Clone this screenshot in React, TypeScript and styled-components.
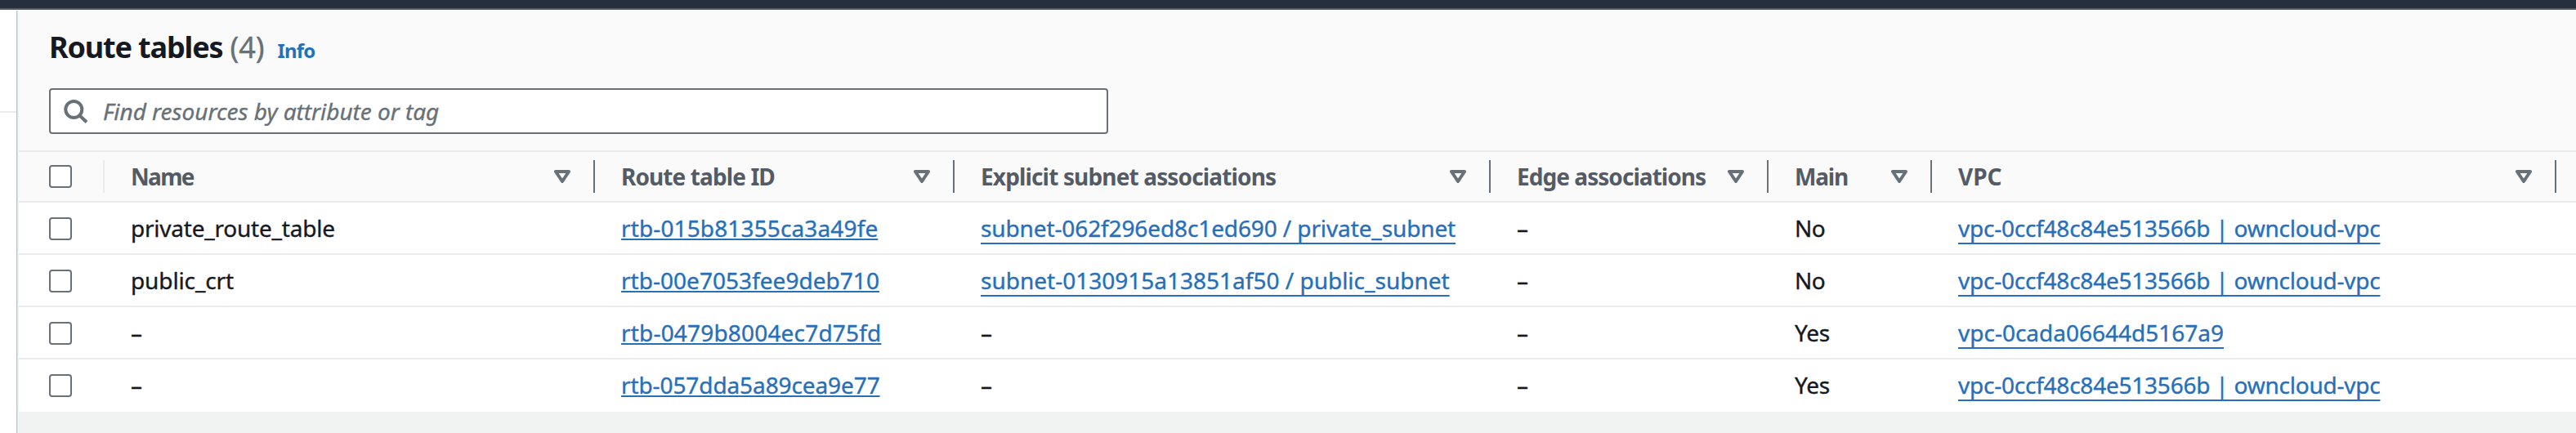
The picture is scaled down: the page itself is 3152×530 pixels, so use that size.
import React from 'react';
import styled, { createGlobalStyle } from 'styled-components';

const GlobalStyle = createGlobalStyle`
  * { box-sizing: border-box; }
  body {
    margin: 0;
    background: #ffffff;
    color: #16191f;
    font-family: "Noto Sans", "Open Sans", sans-serif;
    font-size: 28px;
    line-height: 44px;
    -webkit-text-stroke: 0.35px currentColor;
  }
`;

const Page = styled.div`
  display: flex;
  flex-direction: column;
  height: 530px;
  overflow: hidden;
`;

const TopBar = styled.header`
  flex: none;
  height: 12px;
  background: #262f3e;
  border-bottom: 2px solid #545b66;
`;

const Body = styled.div`
  flex: 1;
  display: flex;
  min-height: 0;
`;

const Sidebar = styled.aside`
  flex: none;
  width: 20px;
  padding-top: 124px;
`;

const SidebarRule = styled.div`
  height: 2px;
  background: #ebebeb;
`;

const PanelEdge = styled.div`
  flex: none;
  width: 3px;
  margin-top: 1px;
  background: linear-gradient(to right, #bcc4c6 0 1px, #e0e4e5 1px 2px, #f3f4f5 2px 3px);
`;

const Panel = styled.main`
  flex: 1;
  min-width: 0;
  background: #f1f3f3;
`;

const PanelHeader = styled.div`
  height: 174px;
  padding: 21px 0 0 37px;
  background: #fafafa;
  border-bottom: 2px solid #ebebeb;
`;

const TitleRow = styled.div`
  display: flex;
  align-items: baseline;
  height: 50px;
  line-height: 50px;
  white-space: pre;
`;

const Title = styled.h1`
  margin: 0 9px 0 0;
  font-size: 36px;
  font-weight: 700;
  letter-spacing: -1.15px;
  -webkit-text-stroke: 0;
`;

const Counter = styled.span`
  width: 58px;
  font-size: 36px;
  color: #687078;
`;

const InfoLink = styled.a`
  font-size: 24px;
  font-weight: 700;
  letter-spacing: -0.8px;
  color: #2570bb;
  -webkit-text-stroke: 0;
`;

const SearchBox = styled.div`
  display: flex;
  align-items: center;
  width: 1296px;
  height: 56px;
  margin-top: 25px;
  padding-left: 14px;
  background: #ffffff;
  border: 2px solid #687078;
  border-radius: 4px;
`;

const Placeholder = styled.span`
  margin-left: 18px;
  font-style: italic;
  letter-spacing: -0.05px;
  color: #687078;
`;

const columns = '105px 600px 440px 656px 340px 200px 764px 1fr';

const HeaderRow = styled.div`
  display: grid;
  grid-template-columns: ${columns};
  height: 62px;
  background: #fafafa;
  border-bottom: 2px solid #ebebeb;
`;

const Row = styled.div`
  display: grid;
  grid-template-columns: ${columns};
  height: 64px;
  background: #ffffff;
  border-bottom: 2px solid #ebebeb;
  &:last-child { border-bottom-color: #ffffff; }
`;

const SelectCell = styled.div<{ $divider?: boolean }>`
  height: ${p => (p.$divider ? '40px' : 'auto')};
  margin-top: ${p => (p.$divider ? '10px' : '12px')};
  padding: 6px 0 0 37px;
  border-right: ${p => (p.$divider ? '2px solid #ebebeb' : 'none')};
`;

const Checkbox = styled.div`
  width: 28px;
  height: 28px;
  background: #ffffff;
  border: 2px solid #687078;
  border-radius: 4px;
`;

const HeaderCell = styled.div`
  display: flex;
  align-items: center;
  justify-content: space-between;
  height: 40px;
  margin-top: 10px;
  padding: 0 28px 0 32px;
  border-right: 2px solid #687078;
`;

const HeaderLabel = styled.span<{ $track: number }>`
  font-weight: 700;
  color: #545b64;
  letter-spacing: ${p => p.$track}px;
  white-space: nowrap;
  -webkit-text-stroke: 0;
`;

const Cell = styled.div<{ $track?: number }>`
  padding: 9px 0 0 32px;
  letter-spacing: ${p => p.$track ?? 0}px;
  white-space: nowrap;
`;

const Link = styled.a<{ $offset: number }>`
  color: #276fb8;
  text-decoration: underline;
  text-decoration-thickness: 2px;
  text-underline-offset: ${p => p.$offset}px;
  text-decoration-skip-ink: none;
`;

const SearchIcon = () => (
  <svg width="32" height="32" viewBox="0 0 32 32" fill="none" stroke="#687078" strokeWidth="4">
    <circle cx="14.3" cy="14" r="10" />
    <path d="M21 21L30 29.5" />
  </svg>
);

const SortIcon = () => (
  <svg width="20" height="16" viewBox="0 0 20 16" fill="none" stroke="#687078" strokeWidth="4" strokeLinejoin="round">
    <path d="M2 2H18L10 14Z" />
  </svg>
);

const headers = [
  { label: 'Name', track: -1.7 },
  { label: 'Route table ID', track: -0.9 },
  { label: 'Explicit subnet associations', track: -0.85 },
  { label: 'Edge associations', track: -0.95 },
  { label: 'Main', track: -1.2 },
  { label: 'VPC', track: 0 },
];

type Value = { text: string; track?: number; link?: 'near' | 'far' };

const dash: Value = { text: '–' };
const ownVpc: Value = { text: 'vpc-0ccf48c84e513566b | owncloud-vpc', track: -0.23, link: 'far' };

const rows: Value[][] = [
  [
    { text: 'private_route_table', track: -0.22 },
    { text: 'rtb-015b81355ca3a49fe', track: 0.13, link: 'near' },
    { text: 'subnet-062f296ed8c1ed690 / private_subnet', track: -0.115, link: 'far' },
    dash,
    { text: 'No', track: -0.5 },
    ownVpc,
  ],
  [
    { text: 'public_crt', track: -0.12 },
    { text: 'rtb-00e7053fee9deb710', track: 0.03, link: 'near' },
    { text: 'subnet-0130915a13851af50 / public_subnet', link: 'far' },
    dash,
    { text: 'No', track: -0.5 },
    ownVpc,
  ],
  [
    dash,
    { text: 'rtb-0479b8004ec7d75fd', track: 0.18, link: 'near' },
    dash,
    dash,
    { text: 'Yes', track: -0.3 },
    { text: 'vpc-0cada06644d5167a9', link: 'far' },
  ],
  [
    dash,
    { text: 'rtb-057dda5a89cea9e77', track: -0.1, link: 'near' },
    dash,
    dash,
    { text: 'Yes', track: -0.3 },
    ownVpc,
  ],
];

export default function App() {
  return (
    <>
      <GlobalStyle />
      <Page>
        <TopBar />
        <Body>
          <Sidebar>
            <SidebarRule />
          </Sidebar>
          <PanelEdge />
          <Panel>
            <PanelHeader>
              <TitleRow>
                <Title>Route tables</Title>
                <Counter>(4)</Counter>
                <InfoLink>Info</InfoLink>
              </TitleRow>
              <SearchBox>
                <SearchIcon />
                <Placeholder>Find resources by attribute or tag</Placeholder>
              </SearchBox>
            </PanelHeader>
            <HeaderRow>
              <SelectCell $divider>
                <Checkbox />
              </SelectCell>
              {headers.map(h => (
                <HeaderCell key={h.label}>
                  <HeaderLabel $track={h.track}>{h.label}</HeaderLabel>
                  <SortIcon />
                </HeaderCell>
              ))}
            </HeaderRow>
            <div>
              {rows.map((row, i) => (
                <Row key={i}>
                  <SelectCell>
                    <Checkbox />
                  </SelectCell>
                  {row.map((v, j) => (
                    <Cell key={j} $track={v.track}>
                      {v.link ? <Link $offset={v.link === 'near' ? 2 : 7}>{v.text}</Link> : v.text}
                    </Cell>
                  ))}
                </Row>
              ))}
            </div>
          </Panel>
        </Body>
      </Page>
    </>
  );
}
